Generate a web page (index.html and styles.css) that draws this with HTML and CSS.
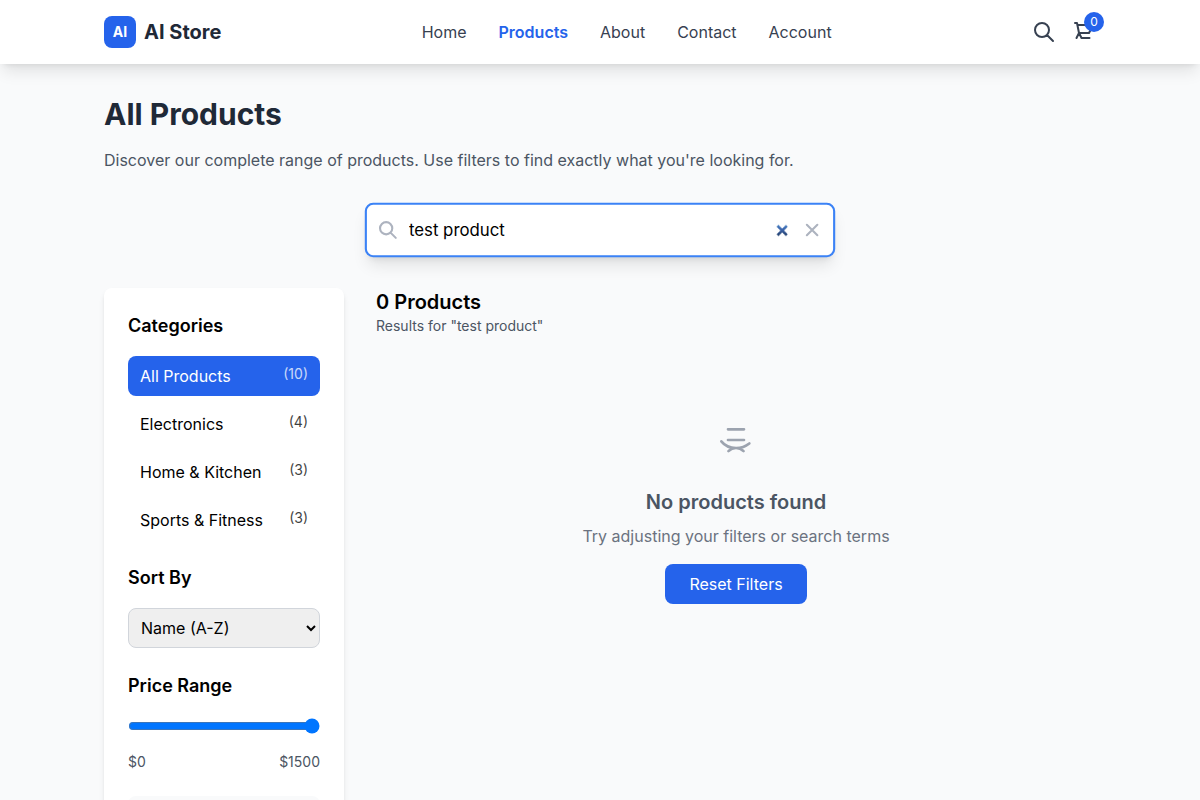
FILE: index.html
```html
<!DOCTYPE html>
<html lang="en">
<head>
<meta charset="utf-8">
<title>AI Store</title>
<link rel="stylesheet" href="styles.css">
</head>
<body>
<header class="header">
  <div class="container header-row">
    <a class="brand"><span class="logo">AI</span><span class="brand-name">AI Store</span></a>
    <nav class="nav">
      <a>Home</a><a class="active">Products</a><a>About</a><a>Contact</a><a>Account</a>
    </nav>
    <div class="actions">
      <button class="icon-button" aria-label="Search"><svg class="icon" viewBox="0 0 24 24"><path d="M21 21l-6-6m2-5a7 7 0 11-14 0 7 7 0 0114 0z"/></svg></button>
      <button class="icon-button" aria-label="Cart"><svg class="icon" viewBox="0 0 24 24"><path d="M3 3h2l.4 2M7 13h10l4-8H5.4m0 0L7 13m0 0l-2.5 5M7 13l2.5 5m0 0h8"/></svg><span class="badge">0</span></button>
    </div>
  </div>
</header>
<main class="container main">
  <h1>All Products</h1>
  <p class="intro">Discover our complete range of products. Use filters to find exactly what you're looking for.</p>
  <div class="search">
    <input class="search-input" type="search" value="test product">
    <svg class="icon search-icon" viewBox="0 0 24 24"><path d="M21 21l-6-6m2-5a7 7 0 11-14 0 7 7 0 0114 0z"/></svg>
    <svg class="icon clear-icon" viewBox="0 0 24 24"><path d="M6 18L18 6M6 6l12 12"/></svg>
  </div>
  <div class="columns">
    <aside class="sidebar">
      <section>
        <h3>Categories</h3>
        <div class="categories">
          <button class="category selected">All Products<span class="count">(10)</span></button>
          <button class="category">Electronics<span class="count">(4)</span></button>
          <button class="category">Home &amp; Kitchen<span class="count">(3)</span></button>
          <button class="category">Sports &amp; Fitness<span class="count">(3)</span></button>
        </div>
      </section>
      <section>
        <h3>Sort By</h3>
        <select class="sort"><option>Name (A-Z)</option></select>
      </section>
      <section>
        <h3>Price Range</h3>
        <input class="range" type="range" min="0" max="1500" value="1500">
        <div class="range-labels"><span>$0</span><span>$1500</span></div>
      </section>
      <div class="panel"></div>
    </aside>
    <section class="results">
      <h2>0 Products</h2>
      <p class="query">Results for "test product"</p>
      <div class="empty">
        <svg class="icon empty-icon" viewBox="0 0 24 24"><path d="M9.172 16.172a4 4 0 015.656 0M9 12h6m-6-4h6m2 5.291A7.962 7.962 0 0112 15c-2.34 0-4.29-.966-5.5-2.5"/></svg>
        <h3>No products found</h3>
        <p>Try adjusting your filters or search terms</p>
        <button class="reset">Reset Filters</button>
      </div>
    </section>
  </div>
</main>
</body>
</html>
```
FILE: styles.css
```css
* { box-sizing: border-box; margin: 0; padding: 0; }
html, body { height: 100%; overflow: hidden; }
body { background: #f9fafb; color: #000; font: 16px/24px Inter, sans-serif; }
button, input, select { font: inherit; color: inherit; border: 0; background: none; }
.container { width: 1024px; margin: 0 auto; padding: 0 16px; }
.icon { display: block; width: 24px; height: 24px; fill: none; stroke: currentColor; stroke-width: 2; stroke-linecap: round; stroke-linejoin: round; }

.header { position: relative; height: 64px; background: #fff; box-shadow: 0 10px 15px -3px rgba(0,0,0,.1), 0 4px 6px -4px rgba(0,0,0,.1); }
.header-row { display: flex; align-items: center; justify-content: space-between; height: 64px; }
.brand { display: flex; align-items: center; gap: 8px; }
.logo { width: 32px; height: 32px; border-radius: 8px; background: #2563eb; color: #fff; font-size: 14px; line-height: 32px; font-weight: 700; text-align: center; }
.brand-name { font-size: 20px; line-height: 28px; font-weight: 700; color: #1f2937; }
.nav { display: flex; gap: 32px; color: #374151; }
.nav .active { color: #2563eb; font-weight: 600; }
.actions { display: flex; gap: 16px; color: #374151; }
.icon-button { position: relative; }
.badge { position: absolute; top: -8px; right: -8px; width: 20px; height: 20px; border-radius: 50%; background: #2563eb; color: #fff; font-size: 12px; line-height: 20px; text-align: center; }

.main { padding-top: 32px; }
h1 { margin-bottom: 16px; font-size: 30px; line-height: 36px; font-weight: 700; color: #1f2937; }
.intro { margin-bottom: 32px; color: #4b5563; }
.search { position: relative; width: 448px; height: 52px; margin: 0 auto 32px; transform: scale(1.05); }
.search-input { display: block; width: 448px; height: 52px; padding: 12px 40px; border: 2px solid #3b82f6; border-radius: 8px; background: #fff; outline: 0; box-shadow: 0 10px 15px -3px rgba(0,0,0,.1), 0 4px 6px -4px rgba(0,0,0,.1); }
.search-input::-webkit-search-cancel-button { opacity: 1; pointer-events: auto; }
.search-icon, .clear-icon { position: absolute; top: 16px; width: 20px; height: 20px; color: #adb3bf; stroke-width: 2.4; }
.search-icon { left: 12px; }
.clear-icon { right: 12px; }

.columns { display: flex; gap: 32px; align-items: flex-start; }
.sidebar { display: flex; flex-direction: column; gap: 24px; width: 240px; padding: 24px; border-radius: 8px; background: #fff; box-shadow: 0 4px 6px -1px rgba(0,0,0,.1), 0 2px 4px -2px rgba(0,0,0,.1); }
.sidebar h3 { margin-bottom: 16px; font-size: 18px; line-height: 28px; font-weight: 600; }
.categories { display: flex; flex-direction: column; gap: 8px; }
.category { display: flex; justify-content: space-between; align-items: flex-start; height: 40px; padding: 8px 12px; border-radius: 8px; text-align: left; }
.count { font-size: 14px; line-height: 20px; opacity: .75; }
.selected { background: #2563eb; color: #fff; }
.sort { display: block; width: 192px; height: 40px; padding: 8px; border: 1px solid #d1d5db; border-radius: 8px; background: #efefef; }
.range { display: block; width: 192px; height: 16px; margin: 18px 0; }
.range-labels { display: flex; justify-content: space-between; color: #4b5563; font-size: 14px; line-height: 20px; }
.panel { height: 40px; border-radius: 8px; background: #f9fafb; }

.results { flex: 1; }
.results h2 { font-size: 20px; line-height: 28px; font-weight: 600; }
.query { color: #4b5563; font-size: 14px; line-height: 20px; }
.empty { display: flex; flex-direction: column; align-items: center; margin-top: 72px; }
.empty-icon { width: 64px; height: 64px; margin-bottom: 16px; color: #9ca3af; stroke-width: 1; }
.empty h3 { margin-bottom: 8px; font-size: 20px; line-height: 28px; font-weight: 600; color: #4b5563; }
.empty p { margin-bottom: 16px; color: #6b7280; }
.reset { height: 40px; padding: 0 24px; border-radius: 8px; background: #2563eb; color: #fff; }
```
